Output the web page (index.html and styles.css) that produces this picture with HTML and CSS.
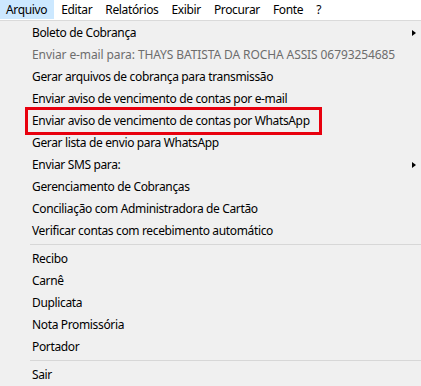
FILE: index.html
```html
<!DOCTYPE html>
<html lang="pt">
<head>
<meta charset="utf-8">
<link rel="stylesheet" href="styles.css">
</head>
<body>
<div class="menubar">
  <span class="top active">Arquivo</span>
  <span class="top">Editar</span>
  <span class="top">Relatórios</span>
  <span class="top">Exibir</span>
  <span class="top">Procurar</span>
  <span class="top">Fonte</span>
  <span class="top">?</span>
</div>
<div class="menu">
  <div class="item sub">Boleto de Cobrança<span class="arrow"></span></div>
  <div class="item disabled caps">Enviar e-mail para: THAYS BATISTA DA ROCHA ASSIS 06793254685</div>
  <div class="item">Gerar arquivos de cobrança para transmissão</div>
  <div class="item">Enviar aviso de vencimento de contas por e-mail</div>
  <div class="item"><span class="mark">Enviar aviso de vencimento de contas por WhatsApp</span></div>
  <div class="item">Gerar lista de envio para WhatsApp</div>
  <div class="item sub">Enviar SMS para:<span class="arrow"></span></div>
  <div class="item">Gerenciamento de Cobranças</div>
  <div class="item">Conciliação com Administradora de Cartão</div>
  <div class="item">Verificar contas com recebimento automático</div>
  <div class="sep"></div>
  <div class="item">Recibo</div>
  <div class="item">Carnê</div>
  <div class="item">Duplicata</div>
  <div class="item">Nota Promissória</div>
  <div class="item">Portador</div>
  <div class="sep"></div>
  <div class="item">Sair</div>
</div>
</body>
</html>
```
FILE: styles.css
```css
html, body {
  margin: 0;
  padding: 0;
  background: #f0f0f0;
  font-family: "Noto Sans", "Open Sans", sans-serif;
  font-size: 12px;
  letter-spacing: -0.35px;
  color: #000;
  overflow: hidden;
}

.menubar {
  display: flex;
  height: 20px;
  background: #fff;
  border-bottom: 1px solid #dadada;
}

.top {
  display: flex;
  align-items: center;
  height: 19px;
  padding: 0 6px 0 6px;
  margin-right: 1px;
  line-height: 19px;
}

.top.active {
  background: #cce8ff;
  padding-right: 7px;
}

.menu {
  display: flex;
  flex-direction: column;
  padding-top: 1px;
}

.item {
  position: relative;
  height: 22px;
  line-height: 22px;
  padding-left: 32px;
  white-space: nowrap;
}

.item.disabled {
  color: #6d6d6d;
}

.item.caps {
  letter-spacing: -0.1px;
}

.arrow {
  position: absolute;
  right: 5px;
  top: 8px;
  width: 0;
  height: 0;
  border-top: 3px solid transparent;
  border-bottom: 3px solid transparent;
  border-left: 4px solid #000;
}

.mark {
  position: absolute;
  left: 25px;
  top: -3px;
  width: 287px;
  height: 22px;
  padding-left: 4px;
  border: 3px solid #e8000e;
  line-height: 22px;
}

.sep {
  height: 6px;
  margin-left: 30px;
  position: relative;
}

.sep::after {
  content: "";
  position: absolute;
  left: 0;
  right: 0;
  top: 2px;
  height: 1px;
  background: #d7d7d7;
}
```
